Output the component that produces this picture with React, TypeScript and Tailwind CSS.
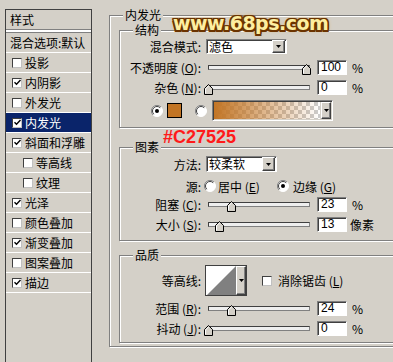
import React from "react";

const layers = [
  { name: "投影", checked: false },
  { name: "内阴影", checked: true },
  { name: "外发光", checked: false },
  { name: "内发光", checked: true, active: true },
  { name: "斜面和浮雕", checked: true },
  { name: "等高线", checked: false, sub: true },
  { name: "纹理", checked: false, sub: true },
  { name: "光泽", checked: true },
  { name: "颜色叠加", checked: false },
  { name: "渐变叠加", checked: true },
  { name: "图案叠加", checked: false },
  { name: "描边", checked: true },
];

const sunken =
  "border border-t-[#808080] border-l-[#808080] border-b-white border-r-white shadow-[inset_1px_1px_0_#404040]";

function Check({ on }: { on: boolean }) {
  return (
    <span className="flex items-center justify-center w-[10px] h-[10px] shrink-0 bg-white border border-t-[#404040] border-l-[#404040] border-b-[#c0c0c0] border-r-[#c0c0c0]">
      {on && (
        <svg width="7" height="7" viewBox="0 0 7 7">
          <path d="M0.5 3.2L2.5 5.2L6.5 1" stroke="#000" strokeWidth="1.4" fill="none" />
        </svg>
      )}
    </span>
  );
}

function Radio({ on, className = "" }: { on?: boolean; className?: string }) {
  return (
    <svg width="12" height="12" viewBox="0 0 12 12" className={`shrink-0 ${className}`}>
      <circle cx="6" cy="6" r="5.5" fill="#fff" stroke="#ffffff" />
      <path d="M10 2A5.5 5.5 0 0 0 2 10" stroke="#808080" fill="none" />
      <path d="M9.2 2.8A4.5 4.5 0 0 0 2.8 9.2" stroke="#404040" fill="none" />
      {on && <circle cx="6" cy="6" r="2" fill="#000" />}
    </svg>
  );
}

function Arrow() {
  return (
    <svg width="5" height="3" viewBox="0 0 5 3">
      <path d="M0 0H5L2.5 3Z" fill="#000" />
    </svg>
  );
}

function DropButton({ className = "" }: { className?: string }) {
  return (
    <span
      className={`flex items-center justify-center bg-[#d4d0c8] border border-t-white border-l-white border-b-[#404040] border-r-[#404040] shadow-[inset_-1px_-1px_0_#808080] ${className}`}
    >
      <Arrow />
    </span>
  );
}

function Select({ value, className = "" }: { value: string; className?: string }) {
  return (
    <div className={`flex items-center bg-white ${sunken} ${className}`}>
      <span className="flex-1 pl-[2px] leading-[12px]">{value}</span>
      <DropButton className="w-[13px] h-full mr-[1px]" />
    </div>
  );
}

function Label({ children }: { children: React.ReactNode }) {
  return <span className="w-[81px] shrink-0 text-right whitespace-nowrap">{children}</span>;
}

function Slider({ thumb }: { thumb: number }) {
  return (
    <div className="relative w-[108px] h-[15px] ml-[3px] shrink-0">
      <div className="ml-[4px] mt-[5px] w-[102px] h-[5px] bg-[#eeeeee] border border-t-[#404040] border-l-[#404040] border-b-[#808080] border-r-[#808080]" />
      <svg
        width="9"
        height="11"
        viewBox="0 0 9 11"
        className="absolute top-[4px]"
        style={{ left: thumb - 204 }}
      >
        <path d="M0.5 10.5V4.5L4.5 0.5L8.5 4.5V10.5Z" fill="#d4d0c8" stroke="#000" />
        <path d="M1.5 9.5V4.9L4.5 1.9" stroke="#fff" fill="none" />
      </svg>
    </div>
  );
}

function NumBox({ value }: { value: string }) {
  return (
    <div
      className={`ml-[5px] w-[30px] h-[15px] shrink-0 bg-white pl-[3px] font-['Liberation_Sans',sans-serif] text-[12px] leading-[13px] ${sunken}`}
    >
      {value}
    </div>
  );
}

function Group({
  title,
  className = "",
  children,
}: {
  title: string;
  className?: string;
  children?: React.ReactNode;
}) {
  return (
    <div
      className={`relative shrink-0 border border-[#808080] shadow-[inset_1px_1px_0_#fff,1px_1px_0_#fff] ${className}`}
    >
      <span className="absolute left-[13px] -top-[8px] px-[2px] leading-[14px] bg-[#d4d0c8]">{title}</span>
      {children}
    </div>
  );
}

export default function App() {
  return (
    <div className="flex items-start w-[393px] h-[362px] overflow-hidden bg-[#d4d0c8] text-black text-[12px] leading-[15px] font-['Noto_Sans_CJK_SC',sans-serif]">
      {/* style list */}
      <aside className="ml-[5px] mt-[9px] w-[87px] h-[370px] shrink-0 border border-[#404040] border-r-[#404040]">
        <div className="h-[20px] pl-[4px] flex items-center border-b border-[#808080]">样式</div>
        <div className="h-[3px] bg-white border-b border-[#808080]" />
        <div className="h-[20px] pl-[4px] flex items-center border-b border-white whitespace-nowrap">
          混合选项:默认
        </div>
        {layers.map((l) => (
          <div
            key={l.name}
            className={`h-[20px] flex items-center border-b border-white ${l.sub ? "pl-[17px]" : "pl-[6px]"} ${
              l.active ? "bg-[#0a246a] text-white" : ""
            }`}
          >
            <Check on={l.checked} />
            <span className="ml-[3px] whitespace-nowrap">{l.name}</span>
          </div>
        ))}
      </aside>

      {/* inner glow settings */}
      <Group title="内发光" className="ml-[17px] mt-[15px] w-[300px] h-[332px]">
        <span className="absolute z-10 left-[63px] -top-[3px] font-['DejaVu_Sans',sans-serif] font-bold text-[19px] leading-[20px] tracking-[-0.5px] text-[#fdeea0] [text-shadow:1.5px_0_0_#6b3300,-1.5px_0_0_#6b3300,0_1.5px_0_#6b3300,0_-1.5px_0_#6b3300,1.5px_1.5px_0_#6b3300,-1.5px_-1.5px_0_#6b3300,1.5px_-1.5px_0_#6b3300,-1.5px_1.5px_0_#6b3300,0_0_4px_#e0a040]">
          www.68ps.com
        </span>

        <Group title="结构" className="mt-[14px] ml-[9px] w-[284px] h-[98px]">
          <div className="flex items-center h-[15px] mt-[8px]">
            <Label>混合模式:</Label>
            <Select value="滤色" className="ml-[5px] w-[81px] h-[15px]" />
          </div>
          <div className="flex items-center h-[15px] mt-[6px]">
            <Label>
              不透明度 (<u>O</u>):
            </Label>
            <Slider thumb={302} />
            <NumBox value="100" />
            <span className="ml-[5px]">%</span>
          </div>
          <div className="flex items-center h-[15px] mt-[5px]">
            <Label>
              杂色 (<u>N</u>):
            </Label>
            <Slider thumb={204} />
            <NumBox value="0" />
            <span className="ml-[5px]">%</span>
          </div>
          <div className="flex items-center h-[21px] mt-[5px]">
            <Radio on className="ml-[31px]" />
            <span className="ml-[4px] w-[15px] h-[15px] border border-black bg-[#c27525]" />
            <Radio className="ml-[13px]" />
            <div className={`ml-[5px] flex w-[121px] h-[21px] ${sunken}`}>
              <span className="flex-1 m-[1px] [background:linear-gradient(to_right,#c27525,rgba(194,117,37,0)),repeating-conic-gradient(#cccccc_0_25%,#ffffff_0_50%)_0_0/8px_8px]" />
              <DropButton className="w-[10px] my-[1px] mr-[1px]" />
            </div>
          </div>
        </Group>

        <Group title="图素" className="mt-[19px] ml-[9px] w-[284px] h-[94px]">
          <span className="absolute left-[43px] -top-[20px] font-['Liberation_Sans',sans-serif] font-bold text-[18px] leading-[18px] text-[#ff1a1a]">
            #C27525
          </span>
          <div className="flex items-center h-[16px] mt-[8px]">
            <Label>方法:</Label>
            <Select value="较柔软" className="ml-[5px] w-[71px] h-[16px]" />
          </div>
          <div className="flex items-center h-[14px] mt-[7px]">
            <Label>源:</Label>
            <div className="flex items-center w-[73px] ml-[3px]">
              <Radio />
              <span className="ml-[2px] whitespace-nowrap">
                居中 (<u>E</u>)
              </span>
            </div>
            <Radio on />
            <span className="ml-[4px] whitespace-nowrap">
              边缘 (<u>G</u>)
            </span>
          </div>
          <div className="flex items-center h-[15px] mt-[4px]">
            <Label>
              阻塞 (<u>C</u>):
            </Label>
            <Slider thumb={227} />
            <NumBox value="23" />
            <span className="ml-[5px]">%</span>
          </div>
          <div className="flex items-center h-[15px] mt-[5px]">
            <Label>
              大小 (<u>S</u>):
            </Label>
            <Slider thumb={215} />
            <NumBox value="13" />
            <span className="ml-[3px]">像素</span>
          </div>
        </Group>

        <Group title="品质" className="mt-[14px] ml-[9px] w-[284px] h-[88px]">
          <div className="flex items-center h-[31px] mt-[9px]">
            <Label>等高线:</Label>
            <div className="ml-[4px] flex w-[42px] h-[31px] border border-[#404040] bg-white">
              <svg width="30" height="29" viewBox="0 0 30 29" className="shrink-0">
                <rect width="30" height="29" fill="#fff" />
                <path d="M1 29L30 0V29Z" fill="#808080" />
              </svg>
              <DropButton className="flex-1 border-l-[#404040]" />
            </div>
            <span className="ml-[15px]">
              <Check on={false} />
            </span>
            <span className="ml-[6px] whitespace-nowrap">
              消除锯齿 (<u>L</u>)
            </span>
          </div>
          <div className="flex items-center h-[15px] mt-[5px]">
            <Label>
              范围 (<u>R</u>):
            </Label>
            <Slider thumb={227} />
            <NumBox value="24" />
            <span className="ml-[5px]">%</span>
          </div>
          <div className="flex items-center h-[15px] mt-[5px]">
            <Label>
              抖动 (<u>J</u>):
            </Label>
            <Slider thumb={204} />
            <NumBox value="0" />
            <span className="ml-[5px]">%</span>
          </div>
        </Group>
      </Group>
    </div>
  );
}
